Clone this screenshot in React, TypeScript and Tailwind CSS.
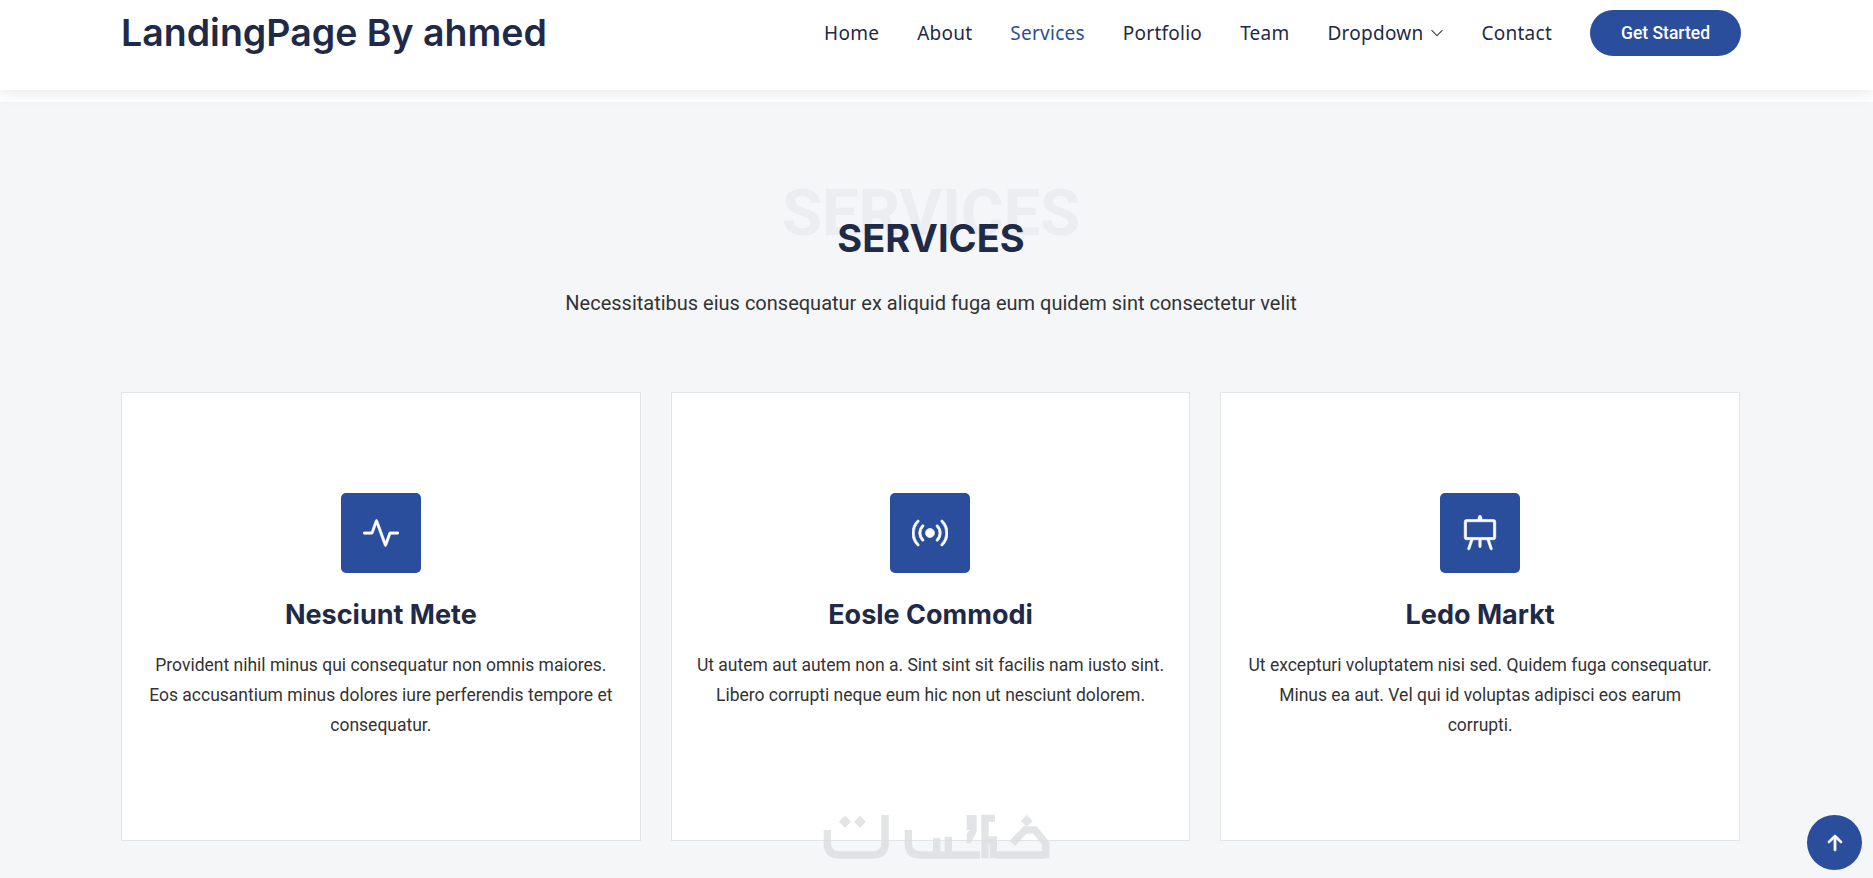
import { BsActivity, BsArrowUpShort, BsBroadcast, BsChevronDown, BsEasel } from 'react-icons/bs';

const navItems = ['Home', 'About', 'Services', 'Portfolio', 'Team', 'Dropdown', 'Contact'];

const services = [
  {
    title: 'Nesciunt Mete',
    text: 'Provident nihil minus qui consequatur non omnis maiores. Eos accusantium minus dolores iure perferendis tempore et consequatur.',
    icon: BsActivity,
  },
  {
    title: 'Eosle Commodi',
    text: 'Ut autem aut autem non a. Sint sint sit facilis nam iusto sint. Libero corrupti neque eum hic non ut nesciunt dolorem.',
    icon: BsBroadcast,
  },
  {
    title: 'Ledo Markt',
    text: 'Ut excepturi voluptatem nisi sed. Quidem fuga consequatur. Minus ea aut. Vel qui id voluptas adipisci eos earum corrupti.',
    icon: BsEasel,
  },
];

// Watermark logo, traced from the picture
function Watermark() {
  return (
    <svg className="absolute left-[780px] top-[780px] opacity-80" width="320" height="98" viewBox="0 0 960 294" fill="none">
      <g stroke="#dcdee1" strokeWidth="22">
        <path d="M142 150V190Q142 225 177 225H280Q315 225 315 190V105" />
        <path d="M385 150V190Q385 225 420 225H600" />
        <path d="M470 175V225M505 170V225" />
        <path d="M615 235V115H645M615 180H640V235" />
        <path d="M650 225H795M697 190L735 150H765L797 190V235" />
      </g>
      <g fill="#dcdee1">
        <path d="M560 105H590V155L572 190H560V160L570 150H560Z" />
        <path d="M195 107L213 125L195 143L177 125Z" />
        <path d="M240 107L258 125L240 143L222 125Z" />
        <path d="M740 105L758 123L740 141L722 123Z" />
      </g>
    </svg>
  );
}

export default function App() {
  return (
    <div className="relative h-screen w-full overflow-hidden bg-white font-['Roboto',sans-serif]">
      {/* Header */}
      <header className="relative z-10 h-[90px] bg-white pr-[11px] shadow-[0_2px_15px_rgba(0,0,0,0.1)]">
        <div className="mx-auto flex h-[66px] w-[1620px] items-center justify-between">
          <h1 className="font-['Inter',sans-serif] text-[37.5px] font-semibold text-[#1e2a47]">
            LandingPage By ahmed
          </h1>
          <nav className="flex items-center gap-[38px]">
            {navItems.map((item) => (
              <a
                key={item}
                className={`flex items-center gap-[6px] font-['Noto_Sans',sans-serif] text-[19px] tracking-[0.25px] ${
                  item === 'Services' ? 'text-[#2a4d9c]' : 'text-[#1e2a47]'
                }`}
              >
                {item}
                {item === 'Dropdown' && <BsChevronDown className="size-[14px]" />}
              </a>
            ))}
            <button className="flex h-[46px] w-[151px] items-center justify-center rounded-[23px] bg-[#2a4d9c] text-[17.5px] font-medium text-white">
              Get Started
            </button>
          </nav>
        </div>
      </header>
      <div className="h-3 bg-white" />

      {/* Services */}
      <section className="h-[776px] bg-[#f4f6f8] pr-[11px] pt-[112px]">
        <div className="mx-auto w-[1620px]">
          <div className="relative text-center">
            <span className="absolute inset-x-0 top-[-41px] text-[65px] font-bold leading-[80px] text-[#ebedf0]">SERVICES</span>
            <h2 className="relative font-['Inter',sans-serif] text-[38px] font-bold leading-[48px] text-[#1e2a47]">SERVICES</h2>
          </div>
          <p className="mt-[26px] text-center text-[20px] leading-[30px] text-[#333333]">
            Necessitatibus eius consequatur ex aliquid fuga eum quidem sint consectetur velit
          </p>
          <div className="mt-[74px] grid w-[1619px] grid-cols-3 gap-[30px]">
            {services.map((service) => (
              <div key={service.title} className="h-[449px] border border-[#e2e4e6] bg-white px-[25px] pt-[100px] text-center">
                <div className="mx-auto flex size-20 items-center justify-center rounded-[5px] bg-[#2a4d9c] text-white">
                  <service.icon className="size-9" strokeWidth={0.3} />
                </div>
                <h3 className="mt-[25px] font-['Inter',sans-serif] text-[27px] font-bold leading-[34px] text-[#1e2a47]">{service.title}</h3>
                <p className="mt-[18px] text-[17.5px] leading-[30px] text-[#333333]">{service.text}</p>
              </div>
            ))}
          </div>
        </div>
      </section>

      <Watermark />

      <button className="absolute left-[1807px] top-[815px] flex size-[55px] items-center justify-center rounded-full bg-[#2a4d9c] text-white">
        <BsArrowUpShort className="size-8" strokeWidth={0.4} />
      </button>
    </div>
  );
}
